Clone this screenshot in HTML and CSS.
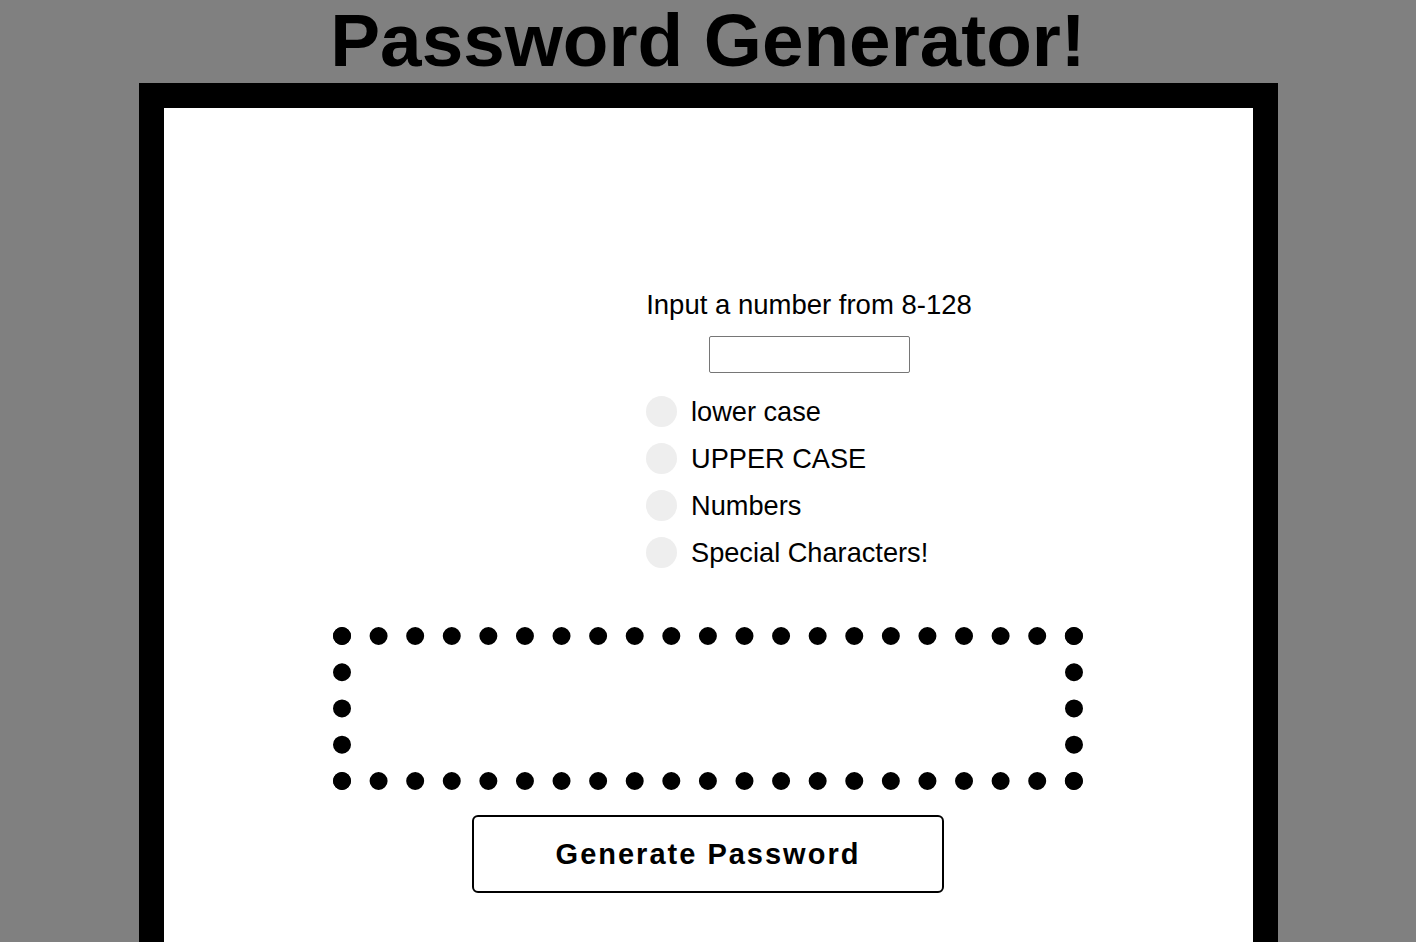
FILE: index.html
```html
<!doctype html>
<html>
<head>
<title>Password Generator</title>
<link rel="stylesheet" href="styles.css">
</head>
<body>
	<h1 class="title">Password Generator!</h1>

	<div class="card">
		<div class="options">
			<label class="lengthLabel" for="length">Input a number from 8-128</label>
			<input id="length" class="lengthInput" type="text">
			<div class="choice"><input type="checkbox" id="lower"><label for="lower">lower case</label></div>
			<div class="choice"><input type="checkbox" id="upper"><label for="upper">UPPER CASE</label></div>
			<div class="choice"><input type="checkbox" id="numbers"><label for="numbers">Numbers</label></div>
			<div class="choice"><input type="checkbox" id="special"><label for="special">Special Characters!</label></div>
		</div>

		<div id="result" class="result"></div>

		<button class="generate" onclick="generate()">Generate Password</button>
	</div>

<script>
function generate() {
	var len = parseInt(document.getElementById("length").value);
	if (!(len >= 8 && len <= 128)) {
		alert("Please pick a number from 8-128");
		return;
	}
	var chars = "";
	if (document.getElementById("lower").checked) chars += "abcdefghijklmnopqrstuvwxyz";
	if (document.getElementById("upper").checked) chars += "ABCDEFGHIJKLMNOPQRSTUVWXYZ";
	if (document.getElementById("numbers").checked) chars += "0123456789";
	if (document.getElementById("special").checked) chars += "!@#$%^&*()-_=+?";
	if (chars == "") {
		alert("Pick at least one type of character");
		return;
	}
	var pass = "";
	for (var i = 0; i < len; i++) {
		pass += chars.charAt(Math.floor(Math.random() * chars.length));
	}
	document.getElementById("result").innerHTML = pass;
}
</script>
</body>
</html>
```

FILE: styles.css
```css
html {
  height: 100%;
}
body {
  margin: 0;
  background-color: #808080;
  font-family: "Liberation Sans", Arial, sans-serif;
}

.title {
  margin: 0 0 3px 0;
  font-size: 74.7px;
  line-height: 80px;
  text-align: center;
  color: #000;
}

.card {
  width: 1089px;
  min-height: 700px;
  margin: 0 auto;
  border: 25px solid #000;
  border-bottom: none;
  background-color: #fff;
  display: flex;
  flex-direction: column;
  align-items: center;
  padding-top: 181px;
  box-sizing: content-box;
}

.options {
  width: 326px;
  margin-left: 202px;
  display: flex;
  flex-direction: column;
}
.lengthLabel {
  font-size: 27.5px;
  line-height: 31px;
  white-space: nowrap;
  text-align: center;
}
.lengthInput {
  align-self: center;
  width: 201px;
  height: 37px;
  margin: 16px 0 15px 0;
  box-sizing: border-box;
  border: 1px solid #767676;
  border-radius: 2px;
  font-size: 18px;
}

.choice {
  display: flex;
  align-items: center;
  gap: 14px;
  height: 47px;
  font-size: 27.2px;
}
.choice input {
  -webkit-appearance: none;
  appearance: none;
  width: 31px;
  height: 31px;
  margin: 0;
  border-radius: 50%;
  background-color: #eeeeee;
}
.choice input:checked {
  background-color: #000;
}

.result {
  width: 714px;
  height: 127px;
  margin-top: 51px;
  border: 18px dotted #000;
  font-size: 24px;
  word-break: break-all;
}

.generate {
  width: 472px;
  height: 78px;
  margin-top: 25px;
  border: 2px solid #000;
  border-radius: 6px;
  background-color: #fff;
  font-family: "Liberation Sans", Arial, sans-serif;
  font-size: 29px;
  font-weight: bold;
  letter-spacing: 2px;
  color: #000;
}
```
